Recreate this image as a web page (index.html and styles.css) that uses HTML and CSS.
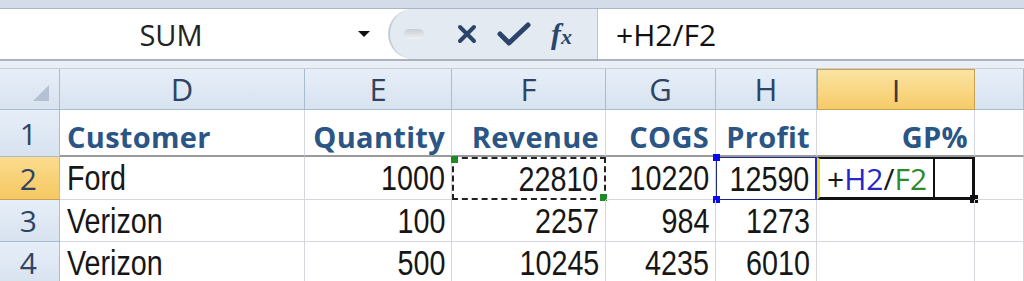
FILE: index.html
```html
<!doctype html>
<html lang="en">
    <head>
        <meta charset="UTF-8">
        <title>SUM - GP%</title>
        <link rel="stylesheet" href="styles.css">
    </head>
    <body>
        <div class="ribbon-edge"></div>
        <div class="formula-bar">
            <div class="namebox">
                <span class="name">SUM</span>
                <svg class="drop" width="14" height="8" viewBox="0 0 14 8"><path d="M1 1h12l-6 6z" fill="#111"/></svg>
            </div>
            <div class="fbuttons">
                <div class="grip"></div>
                <svg class="cancel" width="20" height="20" viewBox="0 0 20 20"><path d="M3 3l14 14M17 3L3 17" stroke="#2b456a" stroke-width="4" stroke-linecap="round"/></svg>
                <svg class="enter" width="34" height="24" viewBox="0 0 34 24"><path d="M3 12l9 9L31 3" fill="none" stroke="#2b456a" stroke-width="5" stroke-linejoin="round" stroke-linecap="round"/></svg>
                <span class="fx">f<small>x</small></span>
            </div>
            <div class="formula">+H2/F2</div>
        </div>
        <div class="band"></div>

        <div class="sheet">
            <div class="corner"><span class="tri"></span></div>
            <div class="colhdr">D</div>
            <div class="colhdr">E</div>
            <div class="colhdr">F</div>
            <div class="colhdr">G</div>
            <div class="colhdr">H</div>
            <div class="colhdr on">I</div>
            <div class="colhdr"></div>

            <div class="rowhdr">1</div>
            <div class="cell head left">Customer</div>
            <div class="cell head">Quantity</div>
            <div class="cell head">Revenue</div>
            <div class="cell head">COGS</div>
            <div class="cell head">Profit</div>
            <div class="cell head">GP%</div>
            <div class="cell head"></div>

            <div class="rowhdr on">2</div>
            <div class="cell left"><span>Ford</span></div>
            <div class="cell"><span>1000</span></div>
            <div class="cell ants"><span>22810</span></div>
            <div class="cell"><span>10220</span></div>
            <div class="cell ref"><span>12590</span></div>
            <div class="cell active left"><span class="edit">+<b class="c1">H2</b>/<b class="c2">F2</b></span></div>
            <div class="cell"></div>

            <div class="rowhdr">3</div>
            <div class="cell left"><span>Verizon</span></div>
            <div class="cell"><span>100</span></div>
            <div class="cell"><span>2257</span></div>
            <div class="cell"><span>984</span></div>
            <div class="cell"><span>1273</span></div>
            <div class="cell"></div>
            <div class="cell"></div>

            <div class="rowhdr">4</div>
            <div class="cell left"><span>Verizon</span></div>
            <div class="cell"><span>500</span></div>
            <div class="cell"><span>10245</span></div>
            <div class="cell"><span>4235</span></div>
            <div class="cell"><span>6010</span></div>
            <div class="cell"></div>
            <div class="cell"></div>
        </div>
    </body>
</html>
```

FILE: styles.css
```css
html, body {
    margin: 0;
    background: #fff;
}
body {
    width: 1024px;
    height: 281px;
    overflow: hidden;
    font-family: "Liberation Sans", Arial, sans-serif;
}
.ribbon-edge {
    height: 8px;
    background: #d3dce8;
    border-bottom: 1px solid #aab6c6;
}
.formula-bar {
    display: flex;
    height: 50px;
    border-bottom: 2px solid #a9b2be;
}
.namebox {
    width: 388px;
    display: flex;
    align-items: center;
}
.name {
    width: 342px;
    text-align: center;
    font-family: "Open Sans", sans-serif;
    font-size: 29px;
    color: #222;
}
.drop {
    margin-left: 15px;
}
.fbuttons {
    width: 207px;
    display: flex;
    align-items: center;
    background: #e4eaf2;
    border-left: 2px solid #c4ccd6;
    border-radius: 26px 0 0 26px;
    border-right: 1px solid #b9c2cd;
}
.grip {
    width: 20px;
    height: 10px;
    margin-left: 14px;
    border-radius: 5px;
    background: linear-gradient(#c9ced5, #eef1f5);
}
.cancel {
    margin-left: 33px;
}
.enter {
    margin-left: 20px;
}
.fx {
    margin-left: 20px;
    font-family: "Liberation Serif", serif;
    font-style: italic;
    font-weight: bold;
    font-size: 30px;
    color: #2b456a;
}
.fx small {
    font-size: 22px;
}
.formula {
    flex: 1;
    display: flex;
    align-items: center;
    padding-left: 18px;
    font-family: "Open Sans", sans-serif;
    font-size: 30px;
    color: #111;
}
.band {
    height: 7px;
    background: #eaeff6;
    border-bottom: 1px solid #c5cfdb;
}
.sheet {
    display: grid;
    grid-template-columns: 60px 245px 147px 154px 110px 101px 158px 1fr;
    grid-template-rows: 41px 47px 43px 42px 42px;
}
.corner, .colhdr, .rowhdr {
    background: linear-gradient(#e6eef8, #d8e3f0);
    color: #2f4463;
    font-family: "Open Sans", sans-serif;
    font-size: 31px;
    box-sizing: border-box;
    border-right: 1px solid #a7bbd1;
    border-bottom: 1px solid #a7bbd1;
}
.corner {
    position: relative;
}
.tri {
    position: absolute;
    right: 10px;
    bottom: 8px;
    width: 0;
    height: 0;
    border-left: 16px solid transparent;
    border-bottom: 16px solid #b3c1d3;
}
.colhdr {
    display: flex;
    align-items: center;
    justify-content: center;
}
.colhdr.on {
    background: linear-gradient(#fbe3a2, #f6cb68);
    border: 1px solid #c8a050;
    color: #3a3a3a;
}
.rowhdr {
    display: flex;
    align-items: center;
    justify-content: flex-end;
    padding-right: 22px;
    font-size: 30px;
}
.rowhdr.on {
    background: linear-gradient(#fbdc8e, #f6c862);
    border-bottom-color: #c8a050;
}
.cell {
    position: relative;
    box-sizing: border-box;
    display: flex;
    align-items: center;
    justify-content: flex-end;
    padding: 0 6px;
    font-size: 35px;
    color: #161616;
    border-right: 1px solid #d4d8de;
    border-bottom: 1px solid #d4d8de;
    white-space: nowrap;
}
.cell > span {
    display: inline-block;
    transform: scaleX(0.82);
    transform-origin: right center;
}
.cell.left {
    justify-content: flex-start;
    padding-left: 7px;
}
.cell.left > span {
    transform-origin: left center;
}
.cell.head {
    padding-top: 8px;
    font-family: "Open Sans", sans-serif;
    font-weight: bold;
    font-size: 29px;
    letter-spacing: 0.3px;
    color: #2a5585;
    border-bottom: 2px solid #9a9a9a;
}
.ants {
    border: 2px dashed #222;
}
.ants::before, .ants::after {
    content: "";
    position: absolute;
    width: 7px;
    height: 7px;
    background: #1d8a25;
}
.ants::before {
    left: -3px;
    top: -3px;
}
.ants::after {
    right: -3px;
    bottom: -3px;
}
.ref {
    border: 1px solid #1c2a86;
    border-right: 2px solid #2727d8;
}
.ref::before, .ref::after {
    content: "";
    position: absolute;
    width: 7px;
    height: 7px;
    background: #0a0af0;
    left: -4px;
}
.ref::before {
    top: -4px;
}
.ref::after {
    bottom: -4px;
}
.active {
    border-top: 2px solid #111;
    border-right: 3px solid #111;
    border-bottom: 3px solid #111;
    border-left: 3px solid #e8e010;
}
.active::after {
    content: "";
    position: absolute;
    right: -6px;
    bottom: -6px;
    width: 8px;
    height: 8px;
    background: #111;
}
.cell > .edit {
    transform: none;
    font-family: "Open Sans", sans-serif;
    font-size: 30px;
    padding-right: 6px;
    border-right: 2px solid #111;
    height: 100%;
    display: flex;
    align-items: center;
}
.edit b {
    font-weight: normal;
}
.c1 {
    color: #2525c8;
}
.c2 {
    color: #2f8a2f;
}
```
